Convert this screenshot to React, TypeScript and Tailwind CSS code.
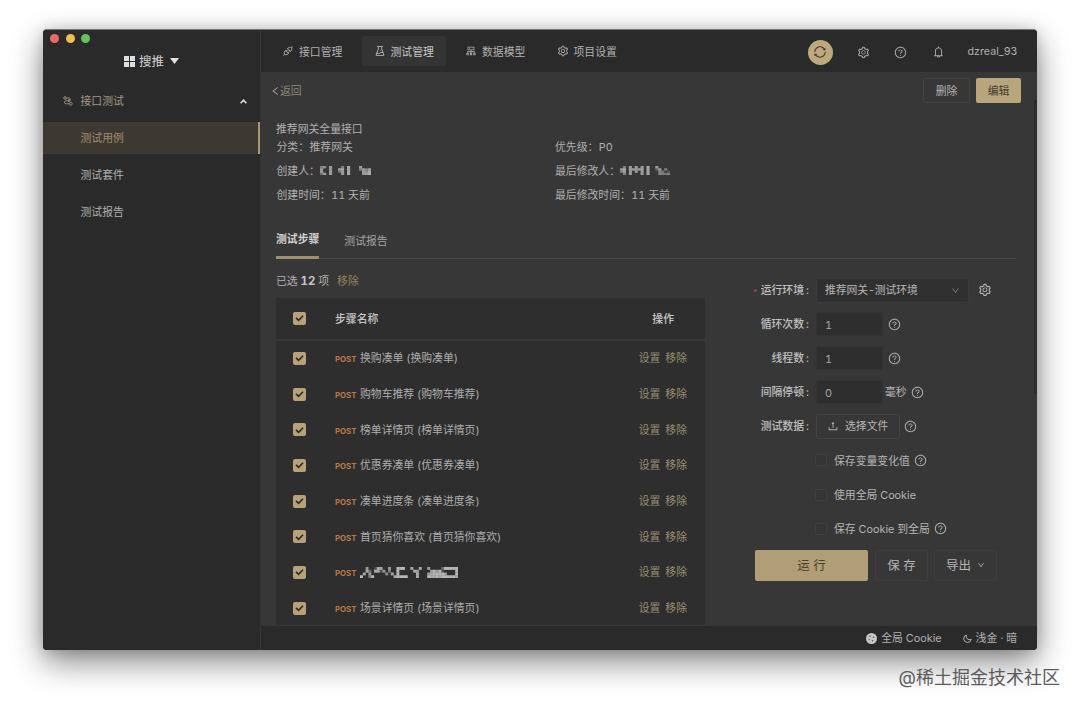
import type { ReactNode } from 'react';
import {
  AiOutlineApi,
  AiOutlineBell,
  AiOutlineCluster,
  AiOutlineDown,
  AiOutlineExperiment,
  AiOutlineLeft,
  AiOutlineQuestionCircle,
  AiOutlineSetting,
  AiOutlineSync,
  AiOutlineUpload,
} from 'react-icons/ai';

interface Step {
  id: number;
  name: string | null;
}

const STEPS: Step[] = [
  { id: 1, name: '换购凑单 (换购凑单)' },
  { id: 2, name: '购物车推荐 (购物车推荐)' },
  { id: 3, name: '榜单详情页 (榜单详情页)' },
  { id: 4, name: '优惠券凑单 (优惠券凑单)' },
  { id: 5, name: '凑单进度条 (凑单进度条)' },
  { id: 6, name: '首页猜你喜欢 (首页猜你喜欢)' },
  { id: 7, name: null },
  { id: 8, name: '场景详情页 (场景详情页)' },
];

const NAV = [
  { label: '接口管理', icon: AiOutlineApi },
  { label: '测试管理', icon: AiOutlineExperiment, active: true },
  { label: '数据模型', icon: AiOutlineCluster },
  { label: '项目设置', icon: AiOutlineSetting },
];

const MENU = [
  { label: '测试用例', active: true },
  { label: '测试套件' },
  { label: '测试报告' },
];

// Brightness maps for masked names, 0 = empty, 9 = brightest
const MASK_CREATOR = ['56070005080007000', '70070078080005757', '70070047080000768', '47070007080000778'];
const MASK_EDITOR = ['05070707080070000', '78077778080037050', '57070707080005402', '05070007080005545'];
const MASK_STEP = [
  '00700288007009990080080070000499999',
  '00840882705009000008700007979200009',
  '08070000060809000000800078999970009',
  '90059000000089999000800098898999998',
];

function Mosaic({ map, width, height }: { map: string[]; width: number; height: number }) {
  const cols = map[0].length;
  return (
    <svg width={width} height={height} viewBox={`0 0 ${cols} ${map.length}`} preserveAspectRatio="none" className="shrink-0">
      {map.map((line, y) =>
        line.split('').map((v, x) => (
          v === '0' ? null : <rect key={`${x}-${y}`} x={x} y={y} width="1.05" height="1.05" fill="#c8c8c8" opacity={Number(v) / 10} />
        )),
      )}
    </svg>
  );
}

function Checkbox({ checked }: { checked?: boolean }) {
  if (!checked) {
    return <span className="h-3 w-3 shrink-0 rounded-[2px] border border-[#404040] bg-[#353535]" />;
  }
  return (
    <span className="flex h-[13px] w-[13px] shrink-0 items-center justify-center rounded-[2px] bg-[#b7a277]">
      <svg width="9" height="8" viewBox="0 0 9 8" fill="none" stroke="#2e2b25" strokeWidth="1.6">
        <path d="M1 3.8 3.6 6.3 8 1.7" />
      </svg>
    </span>
  );
}

function Help() {
  return <AiOutlineQuestionCircle className="h-[13px] w-[13px] shrink-0 text-[#b5b5b5]" />;
}

function Sidebar() {
  return (
    <aside className="flex w-[217px] shrink-0 flex-col bg-[#2a2a2a]">
      <div className="flex h-[17px] items-center gap-[6.5px] pl-[7px]">
        <span className="h-[9px] w-[9px] rounded-full bg-[#ec6a66]" />
        <span className="h-[9px] w-[9px] rounded-full bg-[#f2bd50]" />
        <span className="h-[9px] w-[9px] rounded-full bg-[#63c554]" />
      </div>
      <div className="flex h-[28px] items-center justify-center text-[12.5px] text-[#d2d2d2]">
        <svg width="11" height="11" viewBox="0 0 11 11" fill="#dedede" className="mr-1">
          <path d="M0 0h5v5H0zM6 0h5v5H6zM0 6h5v5H0zM6 6h5v5H6z" />
        </svg>
        <span className="pt-px">搜推</span>
        <svg width="9" height="6" viewBox="0 0 9 6" fill="#e4e4e4" className="ml-1.5">
          <path d="M0 0h9L4.5 6z" />
        </svg>
      </div>
      <div className="mt-[11px] flex h-[30px] items-center pr-[13px] pl-5 text-[#a19781]">
        <svg width="10" height="10" viewBox="0 0 10 10" fill="none" stroke="currentColor" strokeWidth="0.9">
          <circle cx="2" cy="2" r="1.3" />
          <circle cx="7.8" cy="7.8" r="1.4" />
          <path d="M3.3 2h2.6a1.3 1.3 0 0 1 0 2.8H3a1.5 1.5 0 0 0 0 3h3.3" />
          <circle cx="6" cy="4.6" r="1" />
        </svg>
        <span className="ml-[7.5px]">接口测试</span>
        <svg width="7" height="5" viewBox="0 0 7 5" fill="none" stroke="#e0e0e0" strokeWidth="1.5" className="ml-auto">
          <path d="M.6 4.2 3.5 1.2 6.4 4.2" />
        </svg>
      </div>
      <nav className="mt-[6px] flex flex-col gap-[5.5px]">
        {MENU.map((item) => (
          <div
            key={item.label}
            className={`flex h-[31.5px] items-center pt-px pl-[37.5px] ${
              item.active ? 'border-r-2 border-[#a6976f] bg-[#3d3932] text-[#a08f69]' : 'text-[#b0b0b0]'
            }`}
          >
            {item.label}
          </div>
        ))}
      </nav>
    </aside>
  );
}

function Header() {
  return (
    <header className="flex h-[42px] shrink-0 items-center bg-[#2a2a2a] pr-[19px] pl-[9px]">
      <nav className="flex gap-[7.5px]">
        {NAV.map(({ label, icon: Icon, active }) => (
          <div
            key={label}
            className={`flex h-[30px] w-[84px] items-center gap-[5px] rounded-[2px] pl-3 ${
              active ? 'bg-[#343434] text-[#c8c8c8]' : 'text-[#b0b0b0]'
            }`}
          >
            <Icon className="h-[12px] w-[12px]" />
            <span className="pt-px">{label}</span>
          </div>
        ))}
      </nav>
      <div className="ml-auto flex items-center pt-[2px] text-[#b0b0b0]">
        <span className="flex h-[25px] w-[25px] items-center justify-center rounded-full bg-[#bea87c] text-[#3b372f]">
          <AiOutlineSync className="h-[14px] w-[14px]" />
        </span>
        <AiOutlineSetting className="ml-[24px] h-[13px] w-[13px]" />
        <AiOutlineQuestionCircle className="ml-[24px] h-[13px] w-[13px]" />
        <AiOutlineBell className="ml-[25px] h-[14px] w-[13px]" />
        <span className="ml-[23px] text-[10.7px]">dzreal_93</span>
      </div>
    </header>
  );
}

function Meta({ label, children }: { label: string; children: ReactNode }) {
  return (
    <div className="flex h-[18px] w-[278.5px] items-center">
      <span className="mr-[0.5px]">{label}：</span>
      {children}
    </div>
  );
}

function Summary() {
  return (
    <section className="mt-[16.5px] text-[#b0b0b0]">
      <div className="h-[18px] leading-[18px]">推荐网关全量接口</div>
      <div className="flex flex-col gap-[6px] pl-[0.5px]">
        <div className="flex">
          <Meta label="分类">推荐网关</Meta>
          <Meta label="优先级">P0</Meta>
        </div>
        <div className="flex">
          <Meta label="创建人"><Mosaic map={MASK_CREATOR} width={51} height={9} /></Meta>
          <Meta label="最后修改人"><Mosaic map={MASK_EDITOR} width={50} height={9} /></Meta>
        </div>
        <div className="flex">
          <Meta label="创建时间">11 天前</Meta>
          <Meta label="最后修改时间">11 天前</Meta>
        </div>
      </div>
    </section>
  );
}

function StepTable() {
  return (
    <div className="w-[429px]">
      <div className="flex h-[18px] items-center whitespace-pre text-[#b0b0b0]">
        已选 <b className="text-[11.4px] font-bold text-[#c4c4c4]">12</b> 项
        <span className="ml-2 text-[#8f855f]">移除</span>
      </div>
      <div className="mt-[8px] bg-[#2e2e2e]">
        <div className="flex h-[42.5px] items-center border-b-2 border-[#393939] pl-[17px] text-[#c9c9c9]">
          <Checkbox checked />
          <span className="ml-[29px] pt-px font-medium">步骤名称</span>
          <span className="mr-[31px] ml-auto pt-px font-medium">操作</span>
        </div>
        {STEPS.map((step) => (
          <div key={step.id} className="flex h-[35.7px] items-center pl-[17px] text-[#adadad]">
            <Checkbox checked />
            <span className="mt-[2px] ml-[29px] w-[25px] text-[7.8px] font-bold text-[#bd7840]">POST</span>
            {step.name ? <span>{step.name}</span> : <Mosaic map={MASK_STEP} width={98} height={11} />}
            <span className="mr-[18px] ml-auto flex gap-[5px] text-[#98906f]">
              <span>设置</span>
              <span>移除</span>
            </span>
          </div>
        ))}
      </div>
    </div>
  );
}

function Field({ label, required, children }: { label: string; required?: boolean; children: ReactNode }) {
  return (
    <div className="flex h-6 items-center">
      <div className="flex w-[60px] shrink-0 items-center justify-end text-[#c0c0c0]">
        {required && <span className="mr-1 h-[3px] w-[3px] shrink-0 rounded-full bg-[#874848]" />}
        <span className="font-medium">{label}</span>
        <span className="ml-[2px] w-[4px]">:</span>
      </div>
      <div className="ml-[6px] flex items-center">{children}</div>
    </div>
  );
}

function NumberInput({ value }: { value: string }) {
  return <div className="flex h-6 w-[67px] items-center rounded-[2px] border border-[#333333] bg-[#2e2e2e] pt-px pl-2 text-[#a8a8a8]">{value}</div>;
}

function CheckOption({ label, help }: { label: string; help?: boolean }) {
  return (
    <div className="flex h-6 items-center pl-[65px]">
      <Checkbox />
      <span className="mr-[4px] ml-[7px] pt-px">{label}</span>
      {help && <Help />}
    </div>
  );
}

function RunPanel() {
  return (
    <div className="ml-[45px] flex w-[266px] flex-col gap-[10.1px] pt-[6px] whitespace-nowrap text-[#b5b5b5]">
      <Field label="运行环境" required>
        <div className="flex h-[25px] w-[153px] items-center justify-between rounded-[2px] border border-[#3b3b3b] bg-[#303030] pr-[8px] pl-2">
          <span className="tracking-[-0.1px]">推荐网关-测试环境</span>
          <AiOutlineDown className="h-[9px] w-[9px] text-[#858585]" />
        </div>
        <AiOutlineSetting className="ml-[9px] h-[14px] w-[14px] text-[#bdbdbd]" />
      </Field>
      <Field label="循环次数">
        <NumberInput value="1" />
        <span className="ml-[5px]"><Help /></span>
      </Field>
      <Field label="线程数">
        <NumberInput value="1" />
        <span className="ml-[5px]"><Help /></span>
      </Field>
      <Field label="间隔停顿">
        <NumberInput value="0" />
        <span className="mr-[4px] ml-[2px]">毫秒</span>
        <Help />
      </Field>
      <Field label="测试数据">
        <div className="flex h-[25px] w-[84px] items-center gap-[6px] rounded-[2px] border border-[#434343] pl-[10px]">
          <AiOutlineUpload className="h-[12px] w-[12px]" />
          <span>选择文件</span>
        </div>
        <span className="ml-[4px]"><Help /></span>
      </Field>
      <CheckOption label="保存变量变化值" help />
      <CheckOption label="使用全局 Cookie" />
      <CheckOption label="保存 Cookie 到全局" help />
      <div className="-mt-px ml-[5px] flex h-[31px] text-[12.5px]">
        <button className="w-[113px] rounded-[2px] bg-[#b19d76] pt-[2px] text-[#49402d]">运 行</button>
        <button className="ml-[7px] w-[53px] rounded-[2px] border border-[#3f3f3f] pt-[2px]">保 存</button>
        <button className="ml-[6px] flex w-[63px] items-center justify-center gap-[6px] rounded-[2px] border border-[#3f3f3f]">
          <span className="pt-[2px]">导出</span>
          <AiOutlineDown className="h-[8px] w-[8px]" />
        </button>
      </div>
    </div>
  );
}

function Footer() {
  return (
    <footer className="flex h-[25px] shrink-0 items-center justify-end border-t border-[#353535] bg-[#2a2a2a] pr-[19.5px] text-[#b0b0b0]">
      <svg width="11" height="11" viewBox="0 0 11 11" className="mr-[4px]">
        <circle cx="5.5" cy="5.5" r="5.5" fill="#c6c6c6" />
        <g fill="#555">
          <circle cx="4" cy="3.3" r=".8" />
          <circle cx="7.5" cy="4.3" r=".8" />
          <circle cx="3.2" cy="6.6" r=".7" />
          <circle cx="6.5" cy="7.7" r=".8" />
        </g>
      </svg>
      <span>全局 Cookie</span>
      <svg width="9" height="9" viewBox="0 0 9 9" fill="none" stroke="currentColor" strokeWidth="1" className="mr-[4px] ml-[21px]">
        <path d="M3.4 1A3.8 3.8 0 1 0 8.3 5.2C6.8 6 5 5.8 4.2 4.8 3.3 3.8 3 2.3 3.4 1Z" />
      </svg>
      <span>浅金 · 暗</span>
    </footer>
  );
}

export default function App() {
  return (
    <div className="flex h-[707px] w-[1080px] flex-col overflow-hidden bg-white pt-[29px] pl-[43px] font-['Inter','Noto_Sans_CJK_SC',sans-serif] text-[10.84px] leading-4 tabular-nums">
      <div className="flex h-[621px] w-[993.5px] shrink-0 overflow-hidden rounded-[4px] border-t border-[#777777] bg-[#373737] shadow-[0_12px_32px_rgba(0,0,0,0.48),0_0_14px_rgba(0,0,0,0.14)]">
        <Sidebar />
        <main className="flex min-w-0 flex-1 flex-col border-l border-[#353535]">
          <Header />
          <div className="flex min-h-0 flex-1">
            <div className="flex min-w-0 flex-1 flex-col overflow-hidden pt-[6px] pl-[15px]">
              <div className="flex h-[25px] shrink-0 items-center">
                <div className="-ml-[6px] flex items-center text-[#8d8775]">
                  <AiOutlineLeft className="h-[12px] w-[11px] text-[#b3ab98]" />
                  <span className="-ml-px">返回</span>
                </div>
                <button className="ml-auto h-[25px] w-[47px] rounded-[2px] border border-[#424242] pt-px text-[#b5b5b5]">删除</button>
                <button className="mr-[12.5px] ml-[6px] h-[25px] w-[45px] rounded-[2px] bg-[#b9a57c] pt-px text-[#40392b]">编辑</button>
              </div>
              <Summary />
              <div className="mt-[16.5px] mr-[18px] flex h-[39px] shrink-0 gap-[25px] border-b border-[#474747]">
                <div className="-mb-px flex h-[39px] items-center border-b-[3px] border-[#9f8f6c] pt-[2px] font-bold text-[#d0d0d0]">测试步骤</div>
                <div className="flex items-center pt-[4px] text-[#a5a5a5]">测试报告</div>
              </div>
              <div className="flex min-h-0 flex-1 pt-[13px]">
                <StepTable />
                <RunPanel />
              </div>
            </div>
            <div className="w-[3px] shrink-0 pt-[28px]">
              <div className="h-[294px] bg-[#2d2d2d]" />
            </div>
          </div>
          <Footer />
        </main>
      </div>
      <div className="mt-[16px] pr-[20px] text-right text-[18px] leading-6 text-[#5c5c5c]">@稀土掘金技术社区</div>
    </div>
  );
}
